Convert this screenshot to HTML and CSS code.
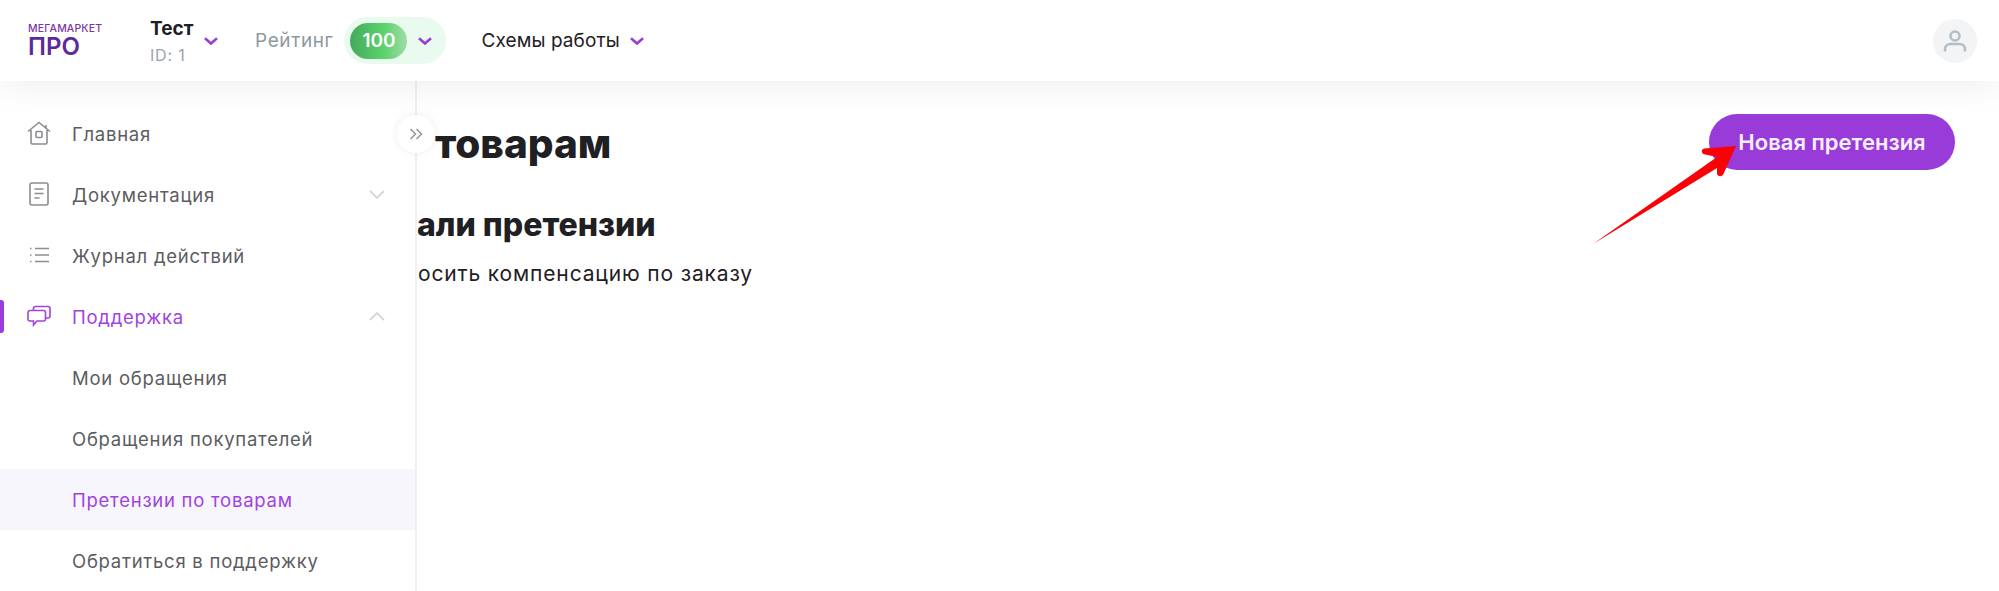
FILE: index.html
```html
<!DOCTYPE html>
<html lang="ru">
<head>
    <meta charset="UTF-8">
    <title>Претензии по товарам</title>
    <link rel="stylesheet" href="styles.css">
</head>
<body>
    <header class="topbar">
        <div class="logo">
            <span class="logo-top">МЕГАМАРКЕТ</span>
            <span class="logo-pro">ПРО</span>
        </div>
        <div class="account">
            <span class="account-name">Тест</span>
            <span class="account-id">ID: 1</span>
        </div>
        <svg class="chevron" viewBox="0 0 14 8"><path d="M1 1.200 7 6.500l6-5.300"/></svg>
        <span class="rating-label">Рейтинг</span>
        <div class="rating">
            <span class="rating-value">100</span>
            <svg class="chevron" viewBox="0 0 14 8"><path d="M1 1.200 7 6.500l6-5.300"/></svg>
        </div>
        <span class="schemes">Схемы работы</span>
        <svg class="chevron" viewBox="0 0 14 8"><path d="M1 1.200 7 6.500l6-5.300"/></svg>
        <div class="avatar">
            <svg viewBox="0 0 24 24"><circle cx="12" cy="7" r="4.500"/><path d="M2 22.500v-2c0-3.200 2.500-5.500 5.500-5.500h9c3 0 5.500 2.300 5.500 5.500v2"/></svg>
        </div>
    </header>

    <div class="page">
        <aside class="sidebar">
            <a class="nav-item">
                <svg class="nav-icon" viewBox="0 0 24 24"><path d="M1 10.500 12 1.500l11 9M19 4V7M4 9v12.500a1.500 1.500 0 0 0 1.500 1.500h13a1.500 1.500 0 0 0 1.500-1.500V9"/><rect x="9" y="10.500" width="6" height="6" rx="1"/></svg>
                Главная
            </a>
            <a class="nav-item">
                <svg class="nav-icon" viewBox="0 0 24 24"><rect x="3" y="1" width="18" height="22" rx="2"/><path d="M7.500 7h9M7.500 11.500h9M7.500 16h5"/></svg>
                Документация
                <svg class="nav-arrow" viewBox="0 0 16 9"><path d="M1 1l7 7 7-7"/></svg>
            </a>
            <a class="nav-item">
                <svg class="nav-icon" viewBox="0 0 24 24"><path d="M8 5.500h14M8 12h14M8 18.500h14M3 5.500h1.500M3 12h1.500M3 18.500h1.500"/></svg>
                Журнал действий
            </a>
            <a class="nav-item active">
                <svg class="nav-icon" viewBox="0 0 24 24"><path d="M6.500 6V4.500a2 2 0 0 1 2-2H21a2 2 0 0 1 2 2V12a2 2 0 0 1-2 2h-2.500"/><path d="M3 6.500h13.500a2 2 0 0 1 2 2V15a2 2 0 0 1-2 2H10l-3.500 4v-4H3a2 2 0 0 1-2-2V8.500a2 2 0 0 1 2-2z"/></svg>
                Поддержка
                <svg class="nav-arrow" viewBox="0 0 16 9"><path d="M1 8l7-7 7 7"/></svg>
            </a>
            <a class="nav-item">Мои обращения</a>
            <a class="nav-item">Обращения покупателей</a>
            <a class="nav-item current">Претензии по товарам</a>
            <a class="nav-item">Обратиться в поддержку</a>
        </aside>

        <main class="content">
            <div class="content-head">
                <h1>товарам</h1>
                <button class="new-claim">Новая претензия</button>
            </div>
            <h2>али претензии</h2>
            <p>осить компенсацию по заказу</p>
        </main>

        <button class="collapse">
            <svg viewBox="0 0 14 12"><path d="M1.500 1 6.500 6l-5 5M7.500 1l5 5-5 5"/></svg>
        </button>
    </div>

    <svg class="annotation" viewBox="0 0 160 110"><path d="M1 102 L125 15 L111 12 Q108 8 112 6.500 L144 4 L131 33 Q127 36 125 32 L125 26 Z"/></svg>
</body>
</html>
```

FILE: styles.css
```css
* {
    margin: 0;
    padding: 0;
    box-sizing: border-box;
}

body {
    font-family: 'Inter', 'Noto Sans', sans-serif;
    background: white;
    height: 591px;
    overflow: hidden;
    color: #1f2024;
}

.topbar {
    position: relative;
    z-index: 2;
    height: 81px;
    display: flex;
    align-items: center;
    padding: 0 22px 0 28px;
    background: white;
    box-shadow: 0 0 40px rgba(0,0,0,0.09);
}

.chevron {
    width: 14px;
    height: 8px;
    fill: none;
    stroke: #9b3bdb;
    stroke-width: 2.6;
}

.logo {
    width: 122px;
    display: flex;
    flex-direction: column;
}

.logo-top {
    font-size: 10.5px;
    font-weight: 500;
    line-height: 12px;
    letter-spacing: 0.15px;
    color: #7b35a8;
}

.logo-pro {
    font-size: 24px;
    font-weight: 600;
    line-height: 24px;
    color: #5d2a9c;
}

.account {
    width: 54px;
    display: flex;
    flex-direction: column;
}

.account-name {
    font-size: 19px;
    font-weight: 700;
    line-height: 24px;
}

.account-id {
    margin-top: 5px;
    font-size: 16px;
    line-height: 18px;
    color: #9ba3ab;
    letter-spacing: 0.8px;
}

.rating-label {
    margin-left: 37px;
    font-size: 19px;
    letter-spacing: 0.6px;
    color: #8f989f;
}

.rating {
    margin-left: 11px;
    width: 102px;
    height: 47px;
    display: flex;
    align-items: center;
    gap: 11px;
    padding-left: 6px;
    border-radius: 24px;
    background: #e8fbee;
}

.rating-value {
    width: 57px;
    height: 36px;
    border-radius: 18px;
    text-align: center;
    font-size: 19px;
    font-weight: 600;
    line-height: 36px;
    color: white;
    background: linear-gradient(90deg, #45a95c, #5cd36c 60%, #a0dca8);
}

.schemes {
    margin-left: 35px;
    margin-right: 10px;
    font-size: 19px;
    letter-spacing: 0.1px;
}

.avatar {
    margin-left: auto;
    width: 44px;
    height: 44px;
    display: flex;
    align-items: center;
    justify-content: center;
    border-radius: 50%;
    background: #f2f4f6;
}

.avatar svg {
    width: 24px;
    height: 24px;
    fill: none;
    stroke: #b4bec6;
    stroke-width: 2.6;
}

.page {
    position: relative;
    height: 510px;
    display: flex;
}

.sidebar {
    width: 417px;
    flex-shrink: 0;
    padding-top: 22px;
    border-right: 2px solid #f0f0f3;
}

.nav-item {
    position: relative;
    height: 61px;
    display: flex;
    align-items: center;
    padding-left: 72px;
    font-size: 18.500px;
    letter-spacing: 0.75px;
    color: #5c5c60;
}

.nav-icon {
    position: absolute;
    left: 27px;
    top: 18px;
    width: 24px;
    height: 24px;
    fill: none;
    stroke: #8d8d92;
    stroke-width: 1.6;
}

.nav-arrow {
    position: absolute;
    left: 369px;
    top: 26px;
    width: 16px;
    height: 9px;
    fill: none;
    stroke: #d5d7da;
    stroke-width: 1.8;
}

.active {
    color: #a043e0;
}

.active .nav-icon {
    stroke: #a043e0;
}

.active::before {
    content: "";
    position: absolute;
    left: 0;
    top: 14px;
    width: 4px;
    height: 33px;
    border-radius: 0 3px 3px 0;
    background: #9b3bdb;
}

.current {
    color: #a043e0;
    background: #f7f6fc;
}

.content {
    flex: 1;
    padding-right: 44px;
}

.content-head {
    display: flex;
    justify-content: space-between;
    align-items: flex-start;
    padding-top: 33px;
}

h1 {
    margin: 7px 0 0 18px;
    font-size: 40.500px;
    font-weight: 800;
    line-height: 46px;
}

.new-claim {
    width: 246px;
    height: 56px;
    border: none;
    border-radius: 28px;
    font-family: inherit;
    font-size: 22px;
    font-weight: 600;
    color: #f8effd;
    background: #993bd9;
}

h2 {
    margin-top: 36px;
    font-size: 32px;
    font-weight: 800;
    line-height: 38px;
}

p {
    margin: 16px 0 0 1px;
    font-size: 21px;
    line-height: 28px;
    letter-spacing: 0.85px;
}

.collapse {
    position: absolute;
    left: 397px;
    top: 34px;
    width: 38px;
    height: 38px;
    display: flex;
    align-items: center;
    justify-content: center;
    border: none;
    border-radius: 50%;
    background: white;
    box-shadow: 0 0 10px rgba(0,0,0,0.07);
}

.collapse svg {
    width: 14px;
    height: 12px;
    fill: none;
    stroke: #9a9a9e;
    stroke-width: 1.6;
}

.annotation {
    position: absolute;
    left: 1592px;
    top: 142px;
    width: 160px;
    height: 110px;
    fill: #fb0007;
}
```
